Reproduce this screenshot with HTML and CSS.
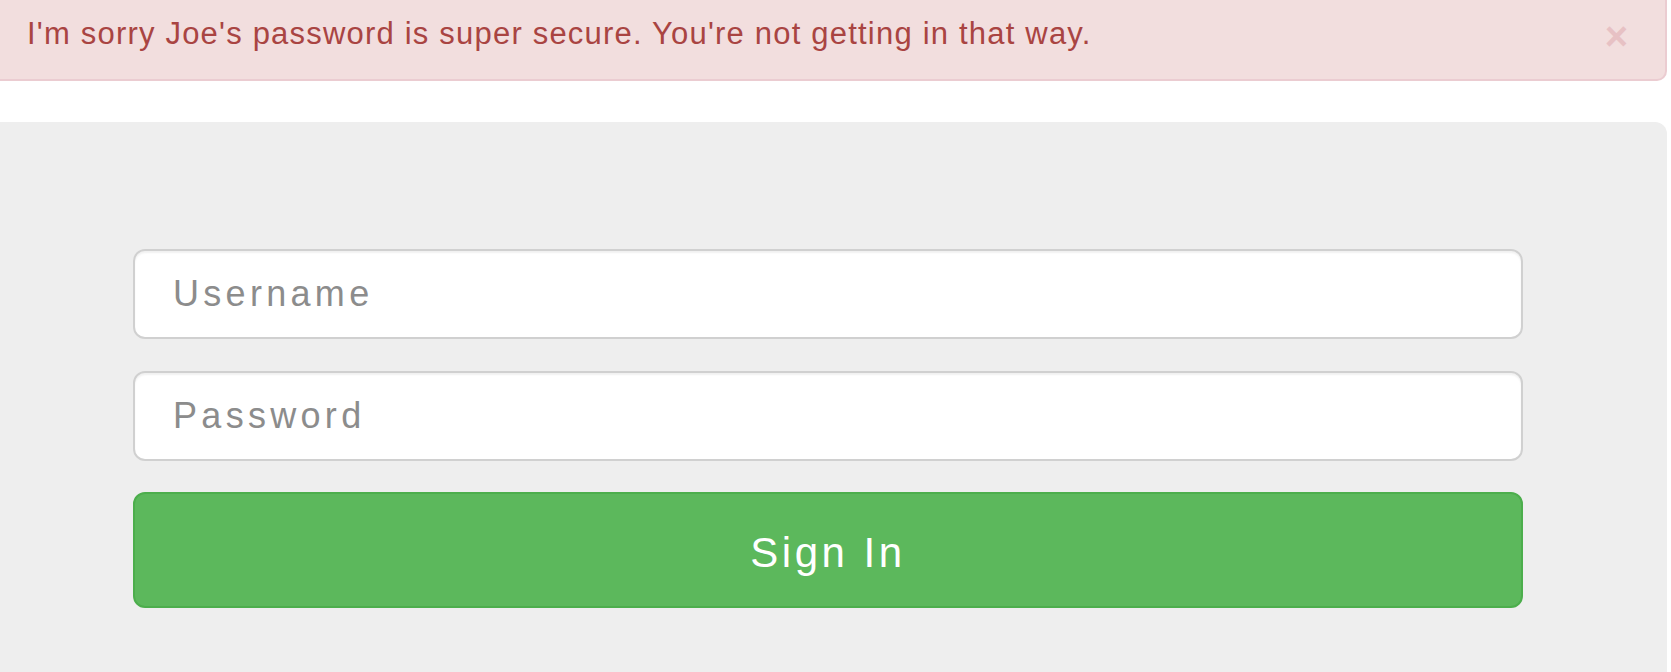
FILE: index.html
```html
<!DOCTYPE html>
<html lang="en">
<head>
<meta charset="utf-8">
<title>Sign In</title>
<link rel="stylesheet" href="styles.css">
</head>
<body>
<div class="page">
  <div class="alert">
    <span class="alert-text">I'm sorry Joe's password is super secure. You're not getting in that way.</span>
    <span class="close">&times;</span>
  </div>
  <div class="panel">
    <form class="login">
      <input class="field" type="text" placeholder="Username">
      <input class="field" type="password" placeholder="Password">
      <button class="btn" type="button">Sign In</button>
    </form>
  </div>
</div>
</body>
</html>
```
FILE: styles.css
```css
html, body {
  margin: 0;
  padding: 0;
  background: #fff;
  overflow: hidden;
}
body {
  font-family: "Liberation Sans", Arial, sans-serif;
}
.page {
  width: 1667px;
  display: flex;
  flex-direction: column;
  gap: 41px;
}
.alert {
  box-sizing: border-box;
  height: 81px;
  background: #f2dede;
  border: 0 solid #ebccd1;
  border-width: 0 2px 2px 0;
  border-bottom-right-radius: 10px;
  color: #a94442;
  display: flex;
  align-items: center;
  justify-content: space-between;
  padding: 0 37px 12px 27px;
}
.alert-text {
  font-size: 31px;
  letter-spacing: 1.2px;
}
.close {
  font-size: 40px;
  font-weight: bold;
  color: #c0505f;
  opacity: 0.2;
  line-height: 1;
  margin-top: 4px;
}
.panel {
  background: #eee;
  border-top-right-radius: 12px;
  height: 560px;
  padding: 127px 144px 0 133px;
  box-sizing: border-box;
}
.login {
  display: flex;
  flex-direction: column;
  gap: 32px;
}
.field {
  box-sizing: border-box;
  height: 90px;
  width: 100%;
  border: 2px solid #d0d0d0;
  border-radius: 12px;
  background: #fff;
  padding: 0 38px;
  font-family: "Liberation Sans", Arial, sans-serif;
  font-size: 36px;
  letter-spacing: 4.3px;
  color: #555;
  box-shadow: inset 0 2px 2px rgba(0,0,0,0.06);
}
.field::placeholder {
  color: #8c8c8c;
}
.btn {
  box-sizing: border-box;
  height: 116px;
  width: 100%;
  margin-top: -1px;
  padding: 6px 0 0;
  background: #5cb85c;
  border: 2px solid #4cae4c;
  border-radius: 12px;
  color: #fff;
  font-family: "Liberation Sans", Arial, sans-serif;
  font-size: 42px;
  letter-spacing: 3.5px;
}
```
